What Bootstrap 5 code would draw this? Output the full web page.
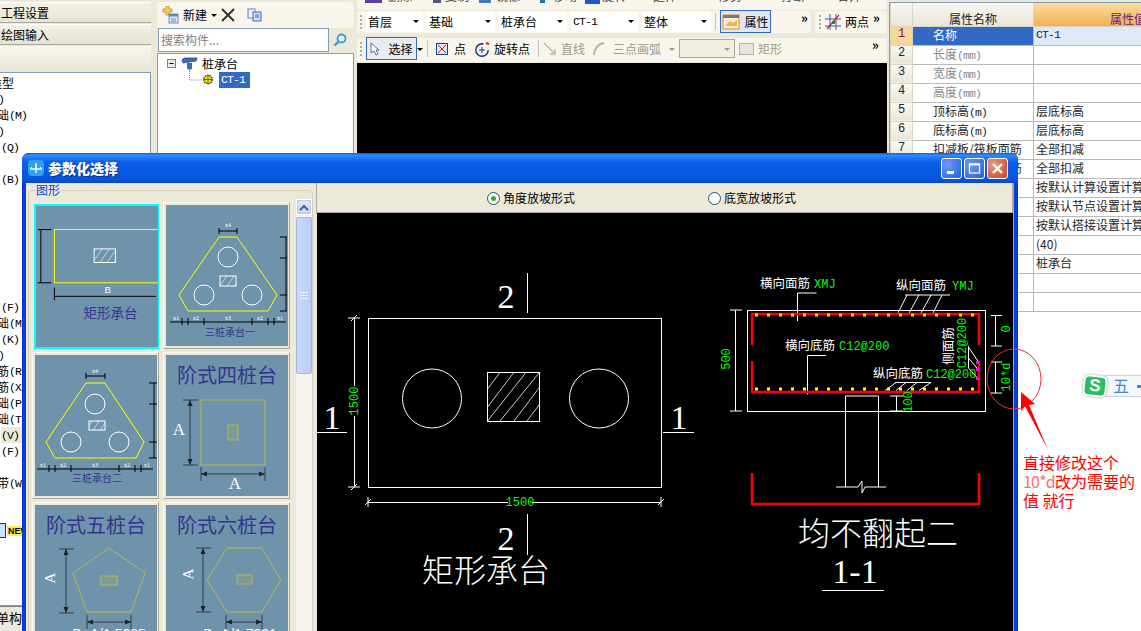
<!DOCTYPE html>
<html lang="zh">
<head>
<meta charset="utf-8">
<title>参数化选择</title>
<link href="https://cdn.jsdelivr.net/npm/bootstrap@5.3.0/dist/css/bootstrap.min.css" rel="stylesheet">
<style>
html,body{margin:0;height:631px;overflow:hidden;background:#ece9d8}
body{font:12px/16px "Noto Sans CJK SC","Liberation Sans",sans-serif;color:#000;position:relative;width:1141px}
.mn{font-family:"Liberation Mono","Noto Sans CJK SC",monospace;font-size:11.5px;letter-spacing:-.9px}
.stage{height:631px}
/* left nav */
.lcol{width:151px;flex:none}
.ltab{height:21px;margin-top:1px;padding-left:1px;line-height:19px;font-size:12px;background:linear-gradient(#f4f2e8,#e6e3d2);border-bottom:1px solid #aca899;border-top:1px solid #fff}
.ltab.first{margin-top:2px}
.lhead{height:26px;margin-top:1px;background:linear-gradient(#f8f7f0,#e9e6d7)}
.llist{height:534px;background:#fff;border:1px solid #7f9db9;border-left:0;overflow:hidden;padding-top:2px;flex:none}
.llist li{height:16px;white-space:nowrap;line-height:16px}
.llist .mn{vertical-align:1px}
.s0{margin-left:1px}.s2{margin-left:-2px}.s10{margin-left:-10px}.s3{margin-left:-3px}
.hl{background:#ece9d8}
.lfoot{height:25px;margin-left:-4px;font-size:13px;line-height:22px;background:#ece9d8;border-top:1px solid #808080;white-space:nowrap}
.newtag{color:#000;background:#ffe94d;font-size:9px;font-weight:700;line-height:10px;padding:0 1px;margin:3px 0 0 1px;font-family:"Liberation Sans",sans-serif}
.listico{width:6px;height:15px;border:1px solid #333;border-left:0;background:#cde0f7;display:inline-block}
/* tree col */
.tcol{width:197px;flex:none;margin-left:6px}
.tbar{height:26px;margin-top:2px;background:#f7f5ec;border-radius:3px}
.srch{height:24px;margin-top:0}
.srchbox{width:171px;height:24px;background:#fff;border:1px solid #7f9db9;margin-left:1px;padding:0 2px;color:#808080;font-size:12px;line-height:22px}
.treebox{height:578px;background:#fff;border:1px solid #7f9db9;margin-top:1px;padding:2px 0 0 9px}
.treerow1{height:15px}
.sel{background:#316ac5;color:#fff;padding:0 2px;height:16px;line-height:16px;width:31px}
/* middle col */
.clip{height:10px;overflow:hidden;background:#f7f5ec;border-radius:0 0 3px 3px;color:#444;position:relative;padding-left:31px;white-space:nowrap}
.clip span{margin-top:-12px;display:block;font-size:12px;flex:none}
.clip span:nth-child(3){margin-left:33px}
.clip span:nth-child(4){margin-left:27px}
.clip span:nth-child(5){margin-left:33px}
.clip span:nth-child(6){margin-left:25px}
.clip span:nth-child(7){margin-left:27px}
.clip span:nth-child(8){margin-left:41px}
.clip span:nth-child(9){margin-left:39px}
.clip span:nth-child(10){margin-left:32px}
.clip svg{position:absolute;left:0;top:0}
.mcol{width:530px;flex:none;margin-left:3px}
.strips{height:23px;margin-top:1px}
.strip{background:#f7f5ec;border-radius:3px;height:22px;padding-left:3px;position:relative;font-size:12px}
.grip{width:2px;height:14px;flex:none;background:repeating-linear-gradient(#b0ad9c 0 2px,transparent 2px 4px)}
.grip.back{margin-left:1px}
.tcombo{background:#fff;height:20px;padding:0 4px 0 2px;border:0;border-radius:0;font-size:12px;line-height:20px;color:#000;text-align:left;display:flex;justify-content:space-between;align-items:center;flex:none}
.tcombo.dropdown-toggle::after{border-width:3px 3px 0;margin:0;color:#000}
.w57{width:57px}.w68{width:68px}.w67{width:67px}.w69{width:69px}
.propbtn{height:23px;width:51px;border:1px solid #316ac5;background:#e3e6ee;line-height:20px}
.more{font-size:13px;font-weight:700;line-height:12px;letter-spacing:-1px;position:absolute;top:1px}
.selbtn{width:51px;height:23px;border:1px solid #316ac5;background:#e8ecf3;flex:none}
.row2{height:24px;margin-top:4px;padding-bottom:2px}
.gap6{margin-left:6px}
.sep{width:1px;height:17px;background:#c5c2b2;flex:none}
.dis{color:#9d9b8c}
.disbox{width:56px;height:19px;border:1px solid #aca899;background:#f1efe4;position:relative;flex:none}
.canvasblack{background:#000;height:569px;margin-top:1px}
/* prop col */
.pcol{flex:1;min-width:0;margin-left:2px;background:#fff;overflow:hidden;margin-top:2px;border-top:1px solid #7f9db9;border-left:1px solid #7f9db9}
.ptable{table-layout:fixed;width:333px;margin:0;border-collapse:collapse;font-size:12px;--bs-table-bg:transparent}
.ptable td,.ptable th{padding:0 2px;height:19px;line-height:15px;border:1px solid #b9b9b9;font-weight:400;white-space:nowrap;overflow:hidden}
.ptable thead th{height:23px;background:linear-gradient(#f8f7f0,#e9e6d7);text-align:center;font-size:12px;border-top:0;border-color:#d8d5c5}
.ptable thead th.val{background:linear-gradient(#fbdb9e,#f0b154);color:#6a1a7a}
.ptable td.num{background:linear-gradient(#faf9f4,#e9e6d7);text-align:center;font-family:"Liberation Mono",monospace;border-color:#d8d5c5}
.ptable td.num.on{background:#fbd594;color:#6a1a7a}
.ptable td.nm{padding-left:20px}
.ptable td.gray{color:#8a8a8a}
.ptable td.cur{background:#316ac5;color:#fff}
.ptable td.curv{background:#dfe8f6}
.cn{width:22px}.cm{width:121px}
/* dialog */
.dlg{position:absolute;left:22px;top:153px;width:996px;height:490px;background:#0a3de0;border-radius:7px 7px 0 0;padding:0 4px;box-shadow:inset 0 0 0 1px #0831d9}
.dtitle{height:30px;margin:0 -4px;padding:0 6px;background:linear-gradient(#0a5fe6,#2f8bff 8%,#0a5de6 30%,#0557e0 85%,#0a49c8);border-radius:7px 7px 0 0;color:#fff;font-weight:700;font-size:14px}
.dtitle b{text-shadow:1px 1px 0 #0a2a80}
.wbtn{width:21px;height:21px;border:1px solid #fff;border-radius:3px;background:radial-gradient(circle at 30% 30%,#6f98f4,#2a5fdc);color:#fff;margin-left:2px;position:relative}
.wbtn.x{background:radial-gradient(circle at 30% 30%,#ee9a80,#c9401c)}
.dbody{height:448px;background:#ece9d8;border-right:2px solid #aca899}
.gpane{width:288px;flex:none;position:relative;padding:8px 0 0 6px}
.gframe{position:absolute;left:2px;top:7px;right:1px;bottom:-20px;border:1px solid #d0d0bf;border-radius:4px}
.glabel{position:absolute;left:9px;top:0;background:#ece9d8;color:#0046d5;font-size:12px;padding:0 1px;line-height:14px}
.tgrid{display:grid;grid-template-columns:127px 127px;grid-auto-rows:147px;gap:3px 4px;position:relative;padding-top:11px}
.tcell{background:#ece9d8;border:1px solid;border-color:#fbfaf5 #aca899 #aca899 #fbfaf5;padding:2px;overflow:hidden}
.tcell.on{border:0}
.tcell.on svg{border:2px solid #00ffff;margin:0;width:126px;height:145px}
.tcell svg{display:block;background:#6f93aa;width:122px;height:141px}
.vbar{width:16px;position:absolute;left:270px;top:16px;bottom:0;background:#f4f3ee}
.sbup{height:16px;background:linear-gradient(#e4ebfc,#c1d3fb);border:1px solid #fff;border-radius:2px;box-shadow:0 0 0 1px #b9c9ee inset}
.sbth{height:157px;margin-top:2px;background:linear-gradient(90deg,#c9d7fb,#b9ccf9);border:1px solid #9fb6ea;border-radius:2px}
.rpane{flex:1;min-width:0;margin-left:2px}
.radiobar{height:30px;padding-top:1px;border-left:1px solid #aca899;border-bottom:1px solid #aca899;font-size:12px}
.rdot{width:13px;height:13px;border-radius:50%;border:1px solid #1c5180;background:#fff;position:relative;flex:none;margin-right:3px}
.rdot.on::after{content:"";position:absolute;left:3px;top:3px;width:5px;height:5px;border-radius:50%;background:#2faa3c}
.ra1{margin-left:170px}.ra2{margin-left:133px}
.cad{display:block;background:#000;width:696px;height:418px;margin-left:1px}
.cad text{font-family:"Noto Sans CJK SC",sans-serif;fill:#fff}
.cad text.g{font-family:"Liberation Mono",monospace;fill:#0f0;font-size:12px}
.cad text.bg{font-size:32px;font-weight:300}
.cad text.sf{font-family:"Liberation Serif",serif;font-size:34px}
.cad text.lb{font-size:12.5px}
/* overlay annotation */
.anno{position:absolute;left:0;top:0;pointer-events:none}
.note{position:absolute;left:1023px;top:453px;width:117px;color:#f00;font-size:16px;line-height:19px}
.note i{font-style:normal;color:#ff6d6d;letter-spacing:-.8px}
.ime{position:absolute;left:1083px;top:375px;width:58px;height:22px;}
.imebar{position:absolute;left:22px;top:0;right:0;height:22px;background:#f7f8fa;border:1px solid #ccd;border-right:0;color:#3d86d6;font-size:16px;line-height:19px;padding-left:7px}
.imemark{position:absolute;right:0;top:9px;width:4px;height:3px;background:#3d86d6}
.imelogo{position:absolute;left:0;top:0;width:24px;height:22px;background:#2dbb63;border:2px solid #fff;border-radius:6px;color:#fff;font:700 17px/18px "Liberation Sans",sans-serif;text-align:center;box-shadow:0 0 2px #888;transform:rotate(6deg)}
</style>
</head>
<body>
<svg width="0" height="0" class="position-absolute">
<defs>
<pattern id="hw" width="6" height="6" patternUnits="userSpaceOnUse" patternTransform="rotate(35)"><line x1="0" y1="0" x2="0" y2="6" stroke="#fff" stroke-width="1"/></pattern>
<pattern id="hy" width="2.5" height="2.5" patternUnits="userSpaceOnUse" patternTransform="rotate(45)"><line x1="0" y1="0" x2="0" y2="2.5" stroke="#b8b848" stroke-width="1"/></pattern>
</defs>
</svg>

<div class="stage d-flex">
  <!-- left navigation -->
  <div class="lcol d-flex flex-column">
    <div class="ltab first">工程设置</div>
    <div class="ltab">绘图输入</div>
    <div class="lhead"></div>
    <ul class="llist list-unstyled m-0">
      <li class="s10">类型</li><li class="s2"><span class="mn">)</span></li><li class="s3">础<span class="mn">(M)</span></li><li class="s2"><span class="mn">)</span></li><li class="s0"><span class="mn">(Q)</span></li><li></li><li class="s0"><span class="mn">(B)</span></li>
      <li></li><li></li><li></li><li></li><li></li><li></li><li></li>
      <li class="s0"><span class="mn">(F)</span></li><li class="s3">础<span class="mn">(M</span></li><li class="s0"><span class="mn">(K)</span></li><li class="s2"><span class="mn">)</span></li><li class="s3">筋<span class="mn">(R</span></li><li class="s3">筋<span class="mn">(X</span></li><li class="s3">础<span class="mn">(P</span></li><li class="s3">础<span class="mn">(T</span></li><li class="s0 hl"><span class="mn">(V)</span></li><li class="s0"><span class="mn">(F)</span></li><li></li><li class="s3">带<span class="mn">(W</span></li><li></li><li></li>
      <li class="d-flex align-items-start"><span class="listico"></span><span class="newtag">NEW</span></li>
    </ul>
    <div class="lfoot">单构件</div>
  </div>

  <!-- component tree -->
  <div class="tcol d-flex flex-column">
    <div class="tbar d-flex align-items-center ps-1 gap-1">
      <svg width="18" height="18" viewBox="0 0 18 18"><path d="M2 3h3V0h3v3h3v3H8v3H5V6H2z" fill="#f6d34a" stroke="#9a7a10" stroke-width=".6"/><rect x="8" y="8" width="9" height="9" fill="#dfe8f6" stroke="#6a8ab5"/><rect x="8" y="8" width="9" height="2.5" fill="#5f86c0"/><path d="M10 13h5M10 15h5" stroke="#6a8ab5"/></svg>
      <span>新建</span>
      <span class="dropdown-toggle"></span>
      <svg width="14" height="14" viewBox="0 0 14 14"><path d="M1 1l12 12M13 1L1 13" stroke="#333" stroke-width="2"/></svg>
      <svg class="ms-2" width="15" height="14" viewBox="0 0 15 14"><rect x="1" y="1" width="7" height="9" fill="#eef3fb" stroke="#5f86c0"/><rect x="6" y="4" width="8" height="9" fill="#cfe0f7" stroke="#3f6cb0"/><path d="M8 7h4M8 9h4" stroke="#3f6cb0"/></svg>
    </div>
    <div class="srch d-flex align-items-center">
      <div class="srchbox">搜索构件...</div>
      <svg class="ms-1" width="14" height="14" viewBox="0 0 14 14"><circle cx="8.500" cy="5.500" r="4" fill="#e8f4fc" stroke="#3d9ad6" stroke-width="1.800"/><path d="M5.500 8.500L1.500 12.500" stroke="#3d9ad6" stroke-width="2.400"/></svg>
    </div>
    <div class="treebox">
      <div class="d-flex align-items-center treerow1">
        <svg width="35" height="16" viewBox="0 0 35 16"><rect x=".5" y="3.500" width="8" height="8" fill="#ecebe2" stroke="#808080"/><path d="M2.500 7.500h4" stroke="#000"/><path d="M15 4l2-2h13l-1 3-13 2z" fill="#3a6fb0" stroke="#123a70" stroke-width=".7"/><rect x="20" y="7" width="5" height="6" fill="#3a6fb0"/><path d="M21 13h3l-1 2z" fill="#6f8fb8"/></svg>
        <span>桩承台</span>
      </div>
      <div class="d-flex align-items-center">
        <svg width="48" height="17" viewBox="0 0 48 17"><path d="M22.500 0v9h13" stroke="#888" stroke-dasharray="1 1" fill="none"/><circle cx="41" cy="8.500" r="4.200" fill="#ffe500" stroke="#333" stroke-dasharray="1.500 .8" stroke-width="1.400"/><path d="M37 8.500h8M41 4.500v8" stroke="#333" stroke-width=".7"/></svg>
        <span class="sel ms-1 mn">CT-1</span>
      </div>
    </div>
  </div>

  <!-- drawing area and toolbars -->
  <div class="mcol d-flex flex-column">
    <div class="clip d-flex">
      <svg width="530" height="4" viewBox="0 0 530 4"><rect x="8" width="17" height="3" fill="#5a3fa0"/><rect x="76" width="8" height="3" fill="#557"/><rect x="122" width="12" height="3" fill="#47b"/><rect x="183" width="5" height="3" fill="#27a"/><rect x="228" width="15" height="4" fill="#25c"/></svg>
      <span>删除</span><span>复制</span><span>镜像</span><span>移动</span><span>旋转</span><span>延伸</span><span>修剪</span><span>打断</span><span>合并</span>
    </div>
    <div class="strips d-flex">
      <div class="strip d-flex align-items-center flex-grow-1 me-1">
        <span class="grip me-1"></span>
        <button class="btn tcombo w57 dropdown-toggle me-1">首层</button>
        <button class="btn tcombo w68 dropdown-toggle me-1">基础</button>
        <button class="btn tcombo w68 dropdown-toggle me-1">桩承台</button>
        <button class="btn tcombo w67 dropdown-toggle me-1"><span class="mn">CT-1</span></button>
        <button class="btn tcombo w69 dropdown-toggle">整体</button>
        <span class="sep ms-1"></span>
        <div class="propbtn d-flex align-items-center justify-content-center gap-1 ms-1">
          <svg width="18" height="16" viewBox="0 0 18 16"><rect x="1" y="1" width="16" height="14" fill="#fbeccf" stroke="#d98a2c"/><rect x="1" y="1" width="16" height="3" fill="#7a7a7a"/><path d="M3 12l5-5 3 2 4-3v6z" fill="#e7b94a"/></svg>
          <span>属性</span>
        </div>
        <span class="more" style="left:444px">»</span>
      </div>
      <div class="strip d-flex align-items-center" style="width:72px;flex:none">
        <span class="grip back"></span>
        <svg class="ms-1" width="16" height="16" viewBox="0 0 16 16"><path d="M0 5h16M0 12h16M5 0v16M11 0v16" stroke="#3a5aa8"/><path d="M2 15L14 1" stroke="#e02020" stroke-width="1.200"/><rect x="7" y="7" width="3" height="3" fill="#2a8a2a"/></svg>
        <span class="ms-1">两点</span>
        <span class="more" style="left:58px">»</span>
      </div>
    </div>
    <div class="strip row2 d-flex align-items-center">
      <span class="grip"></span>
      <div class="selbtn d-flex align-items-center justify-content-center gap-2 ms-1">
        <svg width="10" height="14" viewBox="0 0 10 14"><path d="M1 1v10l3-2 2 4 2-1-2-4h3z" fill="#fff" stroke="#5a6a90"/></svg><span>选择</span>
      </div>
      <span class="dropdown-toggle"></span>
      <span class="sep ms-1"></span>
      <svg class="ms-2" width="12" height="12" viewBox="0 0 12 12"><rect x=".5" y=".5" width="11" height="11" fill="#dfe8f6" stroke="#1d3f8a"/><path d="M2 2l8 8M10 2l-8 8" stroke="#d02020"/></svg>
      <span class="gap6">点</span>
      <svg class="ms-2" width="16" height="16" viewBox="0 0 16 16"><circle cx="8" cy="9" r="6.200" fill="none" stroke="#14307a" stroke-width="1.400" stroke-dasharray="30 8"/><path d="M5 9h6M8 6v6" stroke="#14307a"/><path d="M12 2l3 1" stroke="#d02020" stroke-width="2"/></svg>
      <span class="ms-1">旋转点</span>
      <span class="sep ms-2"></span>
      <svg class="ms-1" width="14" height="14" viewBox="0 0 14 14"><path d="M1 1l11 11M12 7v5H7" stroke="#b5b3a5" fill="none" stroke-width="1.300"/></svg>
      <span class="ms-1 dis">直线</span>
      <svg class="ms-2" width="12" height="14" viewBox="0 0 12 14"><path d="M1 13C1 7 5 2 11 1" stroke="#b5b3a5" fill="none" stroke-width="2"/></svg>
      <span class="ms-2 dis">三点画弧</span>
      <span class="dropdown-toggle dis ms-2"></span>
      <div class="disbox ms-1 d-flex align-items-center justify-content-end pe-1"><span class="dropdown-toggle dis"></span></div>
      <svg class="ms-1" width="15" height="12" viewBox="0 0 15 12"><rect x=".5" y=".5" width="14" height="11" fill="#e8e6dc" stroke="#b5b3a5"/></svg>
      <span class="ms-1 dis">矩形</span>
      <span class="more" style="left:515px">»</span>
    </div>
    <div class="canvasblack"></div>
  </div>

  <!-- properties table -->
  <div class="pcol">
    <table class="table ptable">
      <colgroup><col class="cn"><col class="cm"><col></colgroup>
      <thead><tr><th></th><th>属性名称</th><th class="val">属性值</th></tr></thead>
      <tbody>
        <tr><td class="num on">1</td><td class="nm cur">名称</td><td class="curv mn">CT-1</td></tr>
        <tr><td class="num">2</td><td class="nm gray">长度<span class="mn">(mm)</span></td><td></td></tr>
        <tr><td class="num">3</td><td class="nm gray">宽度<span class="mn">(mm)</span></td><td></td></tr>
        <tr><td class="num">4</td><td class="nm gray">高度<span class="mn">(mm)</span></td><td></td></tr>
        <tr><td class="num">5</td><td class="nm">顶标高<span class="mn">(m)</span></td><td>层底标高</td></tr>
        <tr><td class="num">6</td><td class="nm">底标高<span class="mn">(m)</span></td><td>层底标高</td></tr>
        <tr><td class="num">7</td><td class="nm">扣减板/筏板面筋</td><td>全部扣减</td></tr>
        <tr><td class="num">8</td><td class="nm">扣减板/筏板底筋</td><td>全部扣减</td></tr>
        <tr><td class="num">9</td><td class="nm"></td><td>按默认计算设置计算</td></tr>
        <tr><td class="num">10</td><td class="nm"></td><td>按默认节点设置计算</td></tr>
        <tr><td class="num">11</td><td class="nm"></td><td>按默认搭接设置计算</td></tr>
        <tr><td class="num">12</td><td class="nm"></td><td>(40)</td></tr>
        <tr><td class="num">13</td><td class="nm"></td><td>桩承台</td></tr>
        <tr><td class="num">14</td><td class="nm"></td><td></td></tr>
        <tr><td class="num">15</td><td class="nm"></td><td></td></tr>
      </tbody>
    </table>
  </div>
</div>

<!-- dialog window -->
<div class="dlg d-flex flex-column">
  <div class="dtitle d-flex align-items-center">
    <svg width="16" height="16" viewBox="0 0 16 16"><rect width="16" height="16" rx="4" fill="#2ea0f0"/><path d="M2 9h12M8 3v6M8 9v4" stroke="#fff" stroke-width="1.500" fill="none"/><path d="M2 9l2-2M14 9l-2-2" stroke="#fff"/></svg>
    <b class="ms-1">参数化选择</b>
    <div class="ms-auto d-flex me-1">
      <div class="wbtn"><svg width="19" height="19" viewBox="0 0 19 19" class="d-block"><rect x="5" y="12" width="7" height="3" fill="#fff"/></svg></div>
      <div class="wbtn"><svg width="19" height="19" viewBox="0 0 19 19" class="d-block"><rect x="4.500" y="5" width="10" height="9" fill="none" stroke="#fff" stroke-width="1.200"/><path d="M4.500 5.500h10" stroke="#fff" stroke-width="2"/></svg></div>
      <div class="wbtn x"><svg width="19" height="19" viewBox="0 0 19 19" class="d-block"><path d="M5 5l9 9M14 5l-9 9" stroke="#fff" stroke-width="2.400"/></svg></div>
    </div>
  </div>
  <div class="dbody d-flex">
    <div class="gpane">
      <div class="gframe"></div>
      <div class="glabel">图形</div>
      <div class="tgrid">
        <div class="tcell on"><svg viewBox="-2 -2 126 145">
          <rect x="17" y="22" width="120" height="55" fill="none" stroke="#ff0" stroke-width="1"/>
          <rect x="58" y="42" width="22" height="14" fill="url(#hw)" stroke="#fff"/>
          <path d="M3 22v55M0 22h14M0 77h14M17 91h105M17 82v13" stroke="#000" fill="none"/>
          <text x="72" y="88" fill="#fff" font-size="10" text-anchor="middle" font-family="Liberation Sans">B</text>
          <text x="75" y="113" fill="#34368b" font-size="14" text-anchor="middle">矩形承台</text>
        </svg></div>
        <div class="tcell"><svg viewBox="0 0 122 141">
          <path d="M53 32h18l40 58-9 16H22l-9-16z" fill="none" stroke="#ff0"/>
          <g fill="none" stroke="#fff"><circle cx="62" cy="52" r="10"/><circle cx="38" cy="90" r="10"/><circle cx="86" cy="90" r="10"/></g>
          <rect x="54" y="71" width="16" height="10" fill="url(#hw)" stroke="#fff"/>
          <path d="M53 26h18M53 23v6M71 23v6M120 32v74M114 32h7M114 53h7M114 90h7M114 106h7M4 117h116M16 113v7M22 113v7M38 113v7M86 113v7M102 113v7M108 113v7" stroke="#000" fill="none"/>
          <g fill="#fff" font-size="6" font-family="Liberation Serif" text-anchor="middle"><text x="62" y="22">x4</text><text x="10" y="115">x1</text><text x="30" y="115">x2</text><text x="62" y="115">x3</text><text x="94" y="115">x2</text><text x="114" y="115">x1</text></g>
          <text x="64" y="131" fill="#34368b" font-size="10" text-anchor="middle">三桩承台一</text>
        </svg></div>
        <div class="tcell"><svg viewBox="0 0 122 141">
          <path d="M51 28h19l39 59-8 16H20l-9-16z" fill="none" stroke="#ff0"/>
          <g fill="none" stroke="#fff"><circle cx="60" cy="49" r="10"/><circle cx="36" cy="87" r="10"/><circle cx="84" cy="87" r="10"/></g>
          <rect x="54" y="66" width="16" height="9" fill="url(#hw)" stroke="#fff"/>
          <path d="M51 21h19M51 18v6M70 18v6M119 28v75M114 28h8M114 49h8M114 87h8M114 103h8M2 114h116M14 110v7M20 110v7M36 110v7M84 110v7M100 110v7M106 110v7" stroke="#000" fill="none"/>
          <g fill="#fff" font-size="6" font-family="Liberation Serif" text-anchor="middle"><text x="60" y="18">x4</text><text x="8" y="112">x1</text><text x="28" y="112">x2</text><text x="60" y="112">x3</text><text x="92" y="112">x2</text><text x="112" y="112">x1</text></g>
          <text x="62" y="127" fill="#34368b" font-size="10" text-anchor="middle">三桩承台二</text>
        </svg></div>
        <div class="tcell"><svg viewBox="0 0 122 141">
          <text x="61" y="28" fill="#34368b" font-size="20" text-anchor="middle">阶式四桩台</text>
          <rect x="35" y="45" width="64" height="65" fill="none" stroke="#b8b848"/>
          <rect x="62" y="70" width="10" height="15" fill="url(#hy)" stroke="#b8b848"/>
          <path d="M24 45v65M17 45h15M17 110h15M35 119h64M35 112v14M99 112v14" stroke="#2f3f4f" fill="none"/>
          <path d="M24 45l-2.500 6h5zM24 110l-2.500-6h5zM35 119l6-2.500v5zM99 119l-6-2.500v5z" fill="#222"/>
          <g fill="#fff" font-size="17" font-family="Liberation Serif" text-anchor="middle"><text x="13" y="80">A</text><text x="69" y="134">A</text></g>
        </svg></div>
        <div class="tcell"><svg viewBox="0 0 122 141">
          <text x="61" y="28" fill="#34368b" font-size="20" text-anchor="middle">阶式五桩台</text>
          <path d="M74 43l36 25-14 39H52L38 68z" fill="none" stroke="#b8b848"/>
          <rect x="66" y="71" width="16" height="9" fill="url(#hy)" stroke="#b8b848"/>
          <path d="M31 44v64M24 44h15M24 108h15M52 117h44M52 110v14M96 110v14" stroke="#2f3f4f" fill="none"/>
          <path d="M31 44l-2.500 6h5zM31 108l-2.500-6h5zM52 117l6-2.500v5zM96 117l-6-2.500v5z" fill="#222"/>
          <text transform="translate(20 73) rotate(-90)" fill="#fff" font-size="15" text-anchor="middle" font-family="Liberation Serif">A</text>
          <text x="74" y="134" fill="#fff" font-size="14" text-anchor="middle" font-family="Liberation Sans">B=A/1.5385</text>
        </svg></div>
        <div class="tcell"><svg viewBox="0 0 122 141">
          <text x="61" y="28" fill="#34368b" font-size="20" text-anchor="middle">阶式六桩台</text>
          <path d="M61 43h35l19 32-19 32H61L41 75z" fill="none" stroke="#b8b848"/>
          <rect x="71" y="70" width="15" height="9" fill="url(#hy)" stroke="#b8b848"/>
          <path d="M37 43v64M30 43h15M30 107h15M60 117h36M60 110v14M96 110v14" stroke="#2f3f4f" fill="none"/>
          <path d="M37 43l-2.500 6h5zM37 107l-2.500-6h5zM60 117l6-2.500v5zM96 117l-6-2.500v5z" fill="#222"/>
          <text transform="translate(27 69) rotate(-90)" fill="#fff" font-size="15" text-anchor="middle" font-family="Liberation Serif">A</text>
          <text x="74" y="134" fill="#fff" font-size="14" text-anchor="middle" font-family="Liberation Sans">B=A/1.7321</text>
        </svg></div>
      </div>
      <div class="vbar">
        <div class="sbup text-center"><svg width="10" height="8" viewBox="0 0 10 8" class="d-block mx-auto mt-1"><path d="M1 6l4-4 4 4" fill="none" stroke="#4d6185" stroke-width="2"/></svg></div>
        <div class="sbth d-flex align-items-center justify-content-center"><svg width="8" height="7" viewBox="0 0 8 7"><path d="M0 .5h8M0 3.500h8M0 6.500h8" stroke="#eef3ff"/></svg></div>
      </div>
    </div>
    <div class="rpane d-flex flex-column">
      <div class="radiobar d-flex align-items-center">
        <div class="d-flex align-items-center ra1"><span class="rdot on"></span>角度放坡形式</div>
        <div class="d-flex align-items-center ra2"><span class="rdot"></span>底宽放坡形式</div>
      </div>
      <svg class="cad" viewBox="317 213 696 418">
        <g fill="none" stroke="#fff">
          <rect x="368.500" y="318.500" width="293" height="169"/>
          <circle cx="432" cy="398.500" r="29.500"/><circle cx="599" cy="398.500" r="29.500"/>
          <path d="M527.500 273v40M527.500 514v41M317 432.500h30M663 432.500h31"/>
          <path d="M354.500 318v68M354.500 416v71M348 318h12M348 487h12M351 321l6-6M351 490l6-6"/>
          <path d="M368 502.500h140M532 502.500h129M368 497v10M661 497v10M365 505l6-6M658 505l6-6"/>
          <rect x="487.500" y="372.500" width="52" height="49"/>
          <path d="M487.500 389l12-16M487.500 407l26-34M487.500 421l38-48M500 421l39-48M514 421l25-33M527 421l12-16" stroke-width=".8"/>
        </g>
        <text class="sf" x="506" y="308" text-anchor="middle">2</text>
        <text class="sf" x="506" y="550" text-anchor="middle">2</text>
        <text class="sf" x="332" y="429" text-anchor="middle">1</text>
        <text class="sf" x="679" y="429" text-anchor="middle">1</text>
        <text class="g" transform="translate(358 401) rotate(-90)" text-anchor="middle">1500</text>
        <text class="g" x="520" y="506" text-anchor="middle">1500</text>
        <text class="bg" x="486" y="582" text-anchor="middle">矩形承台</text>

        <g fill="none" stroke="#fff">
          <rect x="747.500" y="310.500" width="238" height="101"/>
          <path d="M735.500 310v101M730 310h12M730 411h12M797.500 321v-28h19M905 295h45M907 295l-10 20M919 295l-11 20M931 295l-11 20M942 295l-10 20"/>
          <path d="M826 355.500h-18.500v39M895 382.500h36M896 382.500l-11 8M906 382.500l-10 8M917 382.500l-10 8M931 382.500l-12 8"/>
          <path d="M968.500 346v22M968.500 347l10 15M968.500 358l10 12M968.500 368l9 10"/>
          <path d="M995.500 315v31M991 315.500h11M991 346h11M995.500 362v31M991 362h11M991 393h11"/>
          <path d="M845.500 411v-15h33v91M845.500 411v76M836 487h22l4-6v12l3-6h21"/>
          <path d="M896.500 396v15M890 396h13M890 411h13"/>
          <path d="M822 590.500h62"/>
        </g>
        <g fill="none" stroke="#f00" stroke-width="2.500">
          <path d="M752 345v-31h227v31M752 361v31h227v-31M752 473v31h227v-31"/>
        </g>
        <path d="M755 315h222M755 389h222" stroke="#ff0" stroke-width="3" stroke-dasharray="3 9"/>
        <g fill="#f0f"><rect x="976" y="361" width="3" height="3"/><rect x="976" y="368" width="3" height="3"/><rect x="976" y="377" width="3" height="3"/></g>
        <text class="lb" x="760" y="288">横向面筋</text><text class="g" x="814" y="288">XMJ</text>
        <text class="lb" x="896" y="290">纵向面筋</text><text class="g" x="952" y="290">YMJ</text>
        <text class="lb" x="785" y="350">横向底筋</text><text class="g" x="839" y="350">C12@200</text>
        <text class="lb" x="873" y="378">纵向底筋</text><text class="g" x="926" y="378">C12@200</text>
        <text class="lb" transform="translate(953 346) rotate(-90)" text-anchor="middle">侧面筋</text>
        <text class="g" transform="translate(966 343) rotate(-90)" text-anchor="middle">C12@200</text>
        <text class="g" transform="translate(730 359) rotate(-90)" text-anchor="middle">500</text>
        <text class="g" transform="translate(1010 329) rotate(-90)" text-anchor="middle">0</text>
        <text class="g" transform="translate(1010 377) rotate(-90)" text-anchor="middle">10*d</text>
        <text class="g" transform="translate(912 402) rotate(-90)" text-anchor="middle">100</text>
        <text class="bg" x="878" y="545" text-anchor="middle">均不翻起二</text>
        <text class="sf" x="855" y="583" text-anchor="middle">1-1</text>
      </svg>
    </div>
  </div>
</div>

<!-- input-method badge and red hand-drawn annotation -->
<div class="ime"><div class="imebar">五<span class="imemark"></span></div><div class="imelogo">S</div></div>
<svg class="anno" width="1141" height="631" viewBox="0 0 1141 631">
  <ellipse cx="1014" cy="379" rx="27" ry="30" fill="none" stroke="#e8332f"/>
  <path d="M1021 392l14 12-6 1 19 45-23-44-4 5z" fill="#f00"/>
</svg>
<div class="note">直接修改这个<br><i>10*d</i>改为需要的<br>值 就行</div>
</body>
</html>
